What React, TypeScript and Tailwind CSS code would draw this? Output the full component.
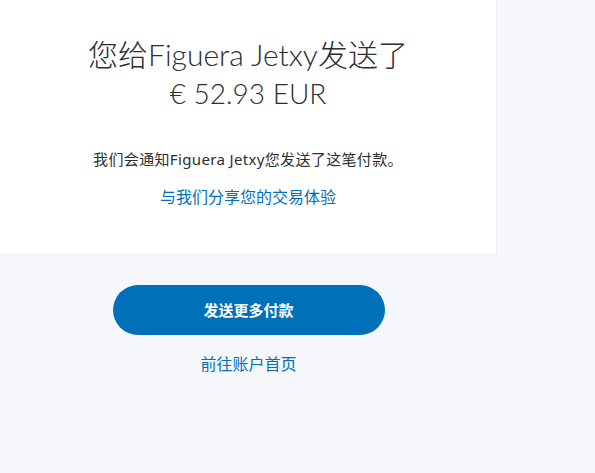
import React from "react";

export default function App() {
  const font = { fontFamily: 'Lato, "Noto Sans CJK SC", sans-serif' };
  const cjk = { fontFamily: '"Noto Sans", "Noto Sans CJK SC", sans-serif' };
  return (
    <div className="min-h-[473px] w-[595px] bg-[#f5f7fa]" style={font}>
      <div className="w-[497px] h-[255px] bg-white border-r border-b border-[#eceff3] flex flex-col items-center pt-[33px]">
        <div className="text-[30px] leading-[42px] font-light text-[#2c2e2f] text-center">
          您给Figuera Jetxy发送了
        </div>
        <div className="text-[28px] leading-[36px] font-light text-[#2c2e2f] text-center">
          € 52.93 EUR
        </div>
        <div className="mt-[38px] text-[15px] leading-[20px] tracking-[0.35px] text-[#2c2e2f]" style={cjk}>
          我们会通知Figuera Jetxy您发送了这笔付款。
        </div>
        <div className="mt-[17px] text-[16px] leading-[22px] text-[#0070ba]" style={cjk}>
          与我们分享您的交易体验
        </div>
      </div>
      <div className="w-[497px] flex flex-col items-center pt-[30px]" style={cjk}>
        <div className="w-[272px] h-[50px] rounded-full bg-[#0070ba] flex items-center justify-center text-white text-[15px] font-semibold">
          发送更多付款
        </div>
        <div className="mt-[18px] text-[16px] leading-[22px] text-[#0070ba]">
          前往账户首页
        </div>
      </div>
    </div>
  );
}
